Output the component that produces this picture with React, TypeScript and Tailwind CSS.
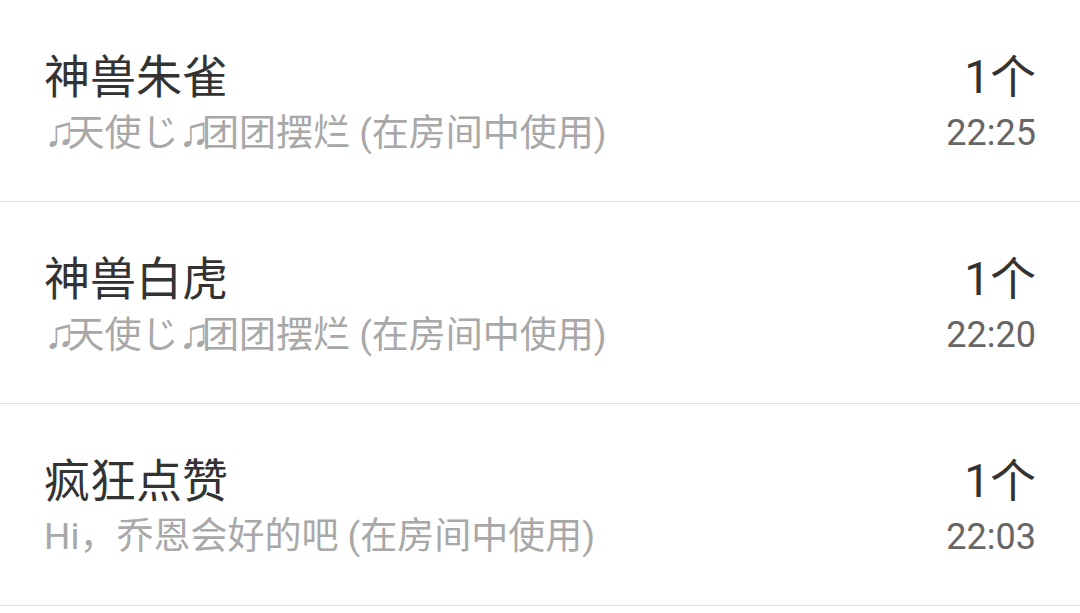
const records = [
  { name: "神兽朱雀", from: "♫天使じ♫团团摆烂", count: "1个", time: "22:25" },
  { name: "神兽白虎", from: "♫天使じ♫团团摆烂", count: "1个", time: "22:20" },
  { name: "疯狂点赞", from: "Hi，乔恩会好的吧", count: "1个", time: "22:03" },
];

// the note glyph is much narrower in the original, so give it its own font
function Sender({ text }: { text: string }) {
  return (
    <>
      {text.split(/(♫)/).map((part, i) =>
        part === "♫" ? (
          <span
            key={i}
            className="font-['Liberation_Sans'] text-[42px] leading-none tracking-[-8px]"
          >
            ♫
          </span>
        ) : (
          <span key={i}>{part}</span>
        ),
      )}
    </>
  );
}

export default function App() {
  return (
    <div className="min-h-screen bg-white font-['Roboto','Noto_Sans_CJK_SC',sans-serif]">
      {records.map((r) => (
        <div
          key={r.time}
          className="flex h-[202px] justify-between border-b border-[#e0e0e0] pl-[44px] pr-[44px] pt-[49px]"
        >
          <div className="flex flex-col">
            <span className="text-[46px] leading-[56px] text-[#333333]">{r.name}</span>
            <span className="mt-[6px] text-[37px] leading-[44px] text-[#a8a8a8]">
              <Sender text={r.from} /> (在房间中使用)
            </span>
          </div>
          <div className="flex flex-col items-end">
            <span className="text-[46px] leading-[56px] text-[#333333]">{r.count}</span>
            <span className="mt-[6px] text-[36px] leading-[44px] text-[#666666]">{r.time}</span>
          </div>
        </div>
      ))}
    </div>
  );
}
